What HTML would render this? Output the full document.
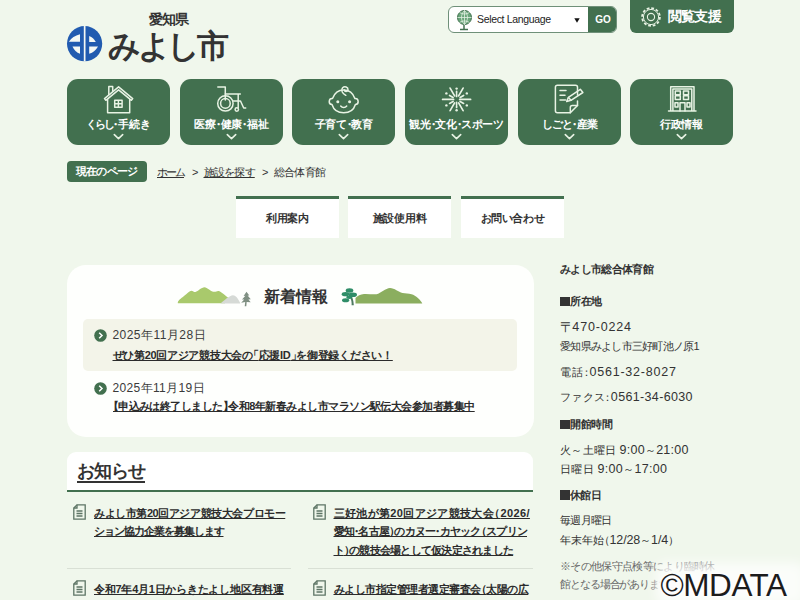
<!DOCTYPE html>
<html lang="ja">
<head>
<meta charset="utf-8">
<title>総合体育館 - みよし市</title>
<style>
*{box-sizing:border-box;margin:0;padding:0}
html,body{width:800px;height:600px;overflow:hidden}
body{font-family:"Liberation Sans",sans-serif;color:#333;background:#f0f7ec;position:relative;font-size:11px}
.abs{position:absolute}
.t{position:absolute;white-space:nowrap}
a{color:inherit}
i{font-style:normal}
i.o{margin-left:-.45em}
i.c{margin-right:-.45em}
i.m{margin:0 -.27em}
/* header */
#logo-mark{left:66px;top:25px;width:37px;height:37px}
#pref{left:149px;top:11px;font-size:13.5px;font-weight:bold;color:#333;line-height:18px}
#city{left:108px;top:26px;font-size:32px;font-weight:bold;color:#333;line-height:40px}
#lang{left:448px;top:6px;width:169px;height:27px;border:1px solid #6f9079;border-radius:6px;background:#fff;overflow:hidden}
#lang .txt{left:28px;top:0;line-height:25px;font-size:10.5px;color:#222}
#lang .arr{left:124px;top:0;line-height:26px;font-size:8px;color:#111}
#lang .go{left:139px;top:-1px;width:30px;height:27px;background:#42704f;color:#fff;font-size:10px;font-weight:bold;text-align:center;line-height:27px}
#assist{left:630px;top:0;width:104px;height:33px;background:#42704f;border-radius:0 0 6px 6px;color:#fff}
#assist .t{left:38px;top:0;font-size:13.5px;font-weight:bold;line-height:34px}
/* nav */
.nav{top:78.500px;width:103px;height:66px;background:#42704f;border-radius:11px;color:#fff;overflow:hidden}
.nav .lbl{position:absolute;left:-20px;right:-20px;top:37.500px;text-align:center;font-size:11px;font-weight:bold;line-height:17px;white-space:nowrap}
.nav svg{position:absolute;left:0;top:-.5px;width:103px;height:67px;fill:none;stroke:#e8f3e4;stroke-width:1.500;stroke-linecap:round;stroke-linejoin:round}
/* breadcrumb */
#here{left:67px;top:161px;width:80px;height:21px;background:#42704f;border-radius:4px;color:#fff}
#here .t{left:9px;top:0;font-size:11px;font-weight:bold;line-height:21px}
.cr{font-size:11px;line-height:20px;top:162px;color:#333}
.cr.u{text-decoration:underline}
/* tabs */
.tab{top:196px;width:103px;height:42px;background:#fff;border-top:3px solid #42704f;font-size:11px;font-weight:bold;text-align:center;line-height:39px;color:#333}
/* news */
#news{left:66.500px;top:264.500px;width:467px;height:172px;background:#fefffd;border-radius:19px}
#news h2{position:absolute;left:197px;top:20px;font-size:16px;line-height:24px;font-weight:bold;color:#333;white-space:nowrap}
.item1{left:16.500px;top:54.500px;width:434px;height:52px;background:#f3f4e9;border-radius:5px}
.date{font-size:12px;color:#3a3a3a;line-height:18px}
.date b{font-weight:normal}
.n b{font-weight:normal;font-size:12.500px}
.lnk{font-size:11px;font-weight:bold;text-decoration:underline;color:#2b2b2b;line-height:18px}
.bul{width:13px;height:13px}
/* oshirase */
#info{left:67px;top:452px;width:466px;height:40px;background:#fff;border-radius:9px 9px 0 0;border-bottom:2px solid #42704f}
#info h2{position:absolute;left:10px;top:6px;font-size:17.5px;font-weight:bold;text-decoration:underline;text-underline-offset:3.500px;text-decoration-thickness:1.500px;line-height:26px;color:#333;white-space:nowrap}
.li{font-size:11px;font-weight:bold;text-decoration:underline;line-height:18px;color:#2b2b2b}
.sepline{height:1px;background:#d9e0d5;top:568px}
.doc{width:13px;height:16px;fill:none;stroke:#5d7565;stroke-width:1.300}
/* side */
.s{left:560px;font-size:11px;color:#333;line-height:18px}
.s.b{font-weight:bold}
.s.g{color:#666}
.sq{display:inline-block;width:9.500px;height:9.500px;background:#333;color:transparent;overflow:hidden;vertical-align:-1px;font-size:8px;line-height:10px;margin-right:.5px}
.yu{font-size:14px;line-height:10px;vertical-align:-.5px;margin-right:-2.500px}
#wm{left:660.500px;top:564.500px;font-size:31.500px;line-height:40px;color:#1c1c1c;text-shadow:0 0 3px #fff,0 0 3px #fff,0 0 5px #fff,0 0 5px #fff,0 0 8px #fff,0 0 8px #fff,0 0 12px #fff,0 0 16px rgba(255,255,255,.9),0 0 20px rgba(255,255,255,.7)}
</style>
</head>
<body>
<!-- HEADER -->
<svg id="logo-mark" class="abs" viewBox="66 25 37 37"><circle cx="84.6" cy="43.7" r="17.6" fill="#215bb0"/>
<g fill="#f4f8f4"><rect x="83.8" y="26" width="1.7" height="35.5"/>
<path d="M68.8 41.7Q72.5 36 80 34.2V41.7Z"/><path d="M89.2 41.9V36Q93.5 37.5 95.8 41.900Z"/>
<path d="M89.200 46.500H98Q95 52 89.200 53.800Z"/><path d="M80 46.400V53.800Q75 52 72.500 46.400Z"/></g></svg>
<div id="pref" class="t" style="letter-spacing:-1.00px;">愛知県</div>
<div id="city" class="t" style="letter-spacing:-3.33px;">みよし市</div>
<div id="lang" class="abs">
  <svg class="abs" style="left:5.500px;top:.5px;width:18px;height:24px" viewBox="0 0 18 24"><circle cx="9.500" cy="9.500" r="7" fill="#6aa57a" stroke="#42704f" stroke-width="1"/><path d="M2.500 9.500h14M9.500 2.500v14M4.500 4.500c3.500 2 6.500 2 10 0M4.500 14.500c3.500-2 6.500-2 10 0M9.500 2.500c-4 4-4 10 0 14M9.500 2.500c4 4 4 10 0 14" stroke="#e2f0e2" stroke-width=".8" fill="none"/><path d="M5 21.500h8M9 17v4.500" stroke="#42704f" stroke-width="1.500" fill="none"/></svg>
  <div class="t txt" style="letter-spacing:-0.34px;">Select Language</div>
  <svg class="abs" style="left:124.500px;top:10.500px;width:6px;height:5px" viewBox="0 0 7 6"><path d="M.3 .3H6.700L3.500 5.600Z" fill="#111"/></svg>
  <div class="abs go">GO</div>
</div>
<div id="assist" class="abs"><div class="t" style="letter-spacing:-0.83px;">閲覧支援</div>
  <svg class="abs" style="left:10px;top:6px;width:22px;height:22px" viewBox="-11 -11 22 22" fill="none" stroke="#e8f3e4" stroke-width="1.1"><circle r="3.600"/><circle r="8.600" stroke-width="2.400" stroke-dasharray="2.700 1.803"/><circle r="7.300" stroke="#42704f" stroke-width="1.6"/><circle r="7.600" stroke-width="1"/></svg>
</div>

<!-- NAV -->
<div class="abs nav" style="left:67px"><svg viewBox="0 0 103 67"><path d="M37.500 20.600L51.600 8.900L65.700 20.600L64.400 22.300L51.600 11.800L38.800 22.300Z"/><path d="M40.600 21.500V34.800H62.700V21.500"/><path d="M41.800 16.500V8.600H45.700V13.300"/><path d="M47.700 22.200h7.400v7h-7.400zM51.400 22.200v7M47.700 25.700h7.400"/><path d="M47.300 56.600L51.500 60.600L55.700 56.600" stroke-width="1.600"/></svg><div class="lbl" style="letter-spacing:-0.01px;"><span style="letter-spacing:-2px">くらし</span><i class="m">・</i>手続き</div></div>
<div class="abs nav" style="left:180px"><svg viewBox="0 0 103 67"><path d="M37.800 9H45.300V22"/><path d="M45.300 16h15M58.200 16v13.500"/><circle cx="45.400" cy="25.400" r="7.700"/><circle cx="45.400" cy="25.400" r="4.800"/><path d="M53.200 23h7.300l3.200 7h2"/><circle cx="56.800" cy="31.500" r="1.700"/><path d="M47.300 56.600L51.500 60.600L55.700 56.600" stroke-width="1.600"/></svg><div class="lbl" style="letter-spacing:-0.16px;">医療<i class="m">・</i>健康<i class="m">・</i>福祉</div></div>
<div class="abs nav" style="left:292px"><svg viewBox="0 0 103 67"><path d="M40.500 20.500a3 3 0 0 0-.5 6c1.500 5 6 8.300 11.700 8.300s10.200-3.300 11.700-8.300a3 3 0 0 0-.5-6C61 15 57 12 51.700 12S42.500 15 40.500 20.500z"/><path d="M53.800 17.300C50.200 15.500 48.600 12 50.600 9.800C52.600 7.700 56.200 9 56 11.800C55.800 14 52.600 14.300 52.400 12"/><circle cx="45.800" cy="23.800" r="1.500" fill="#e8f3e4" stroke="none"/><circle cx="57.600" cy="23.800" r="1.500" fill="#e8f3e4" stroke="none"/><path d="M48.700 28c1.500 2 4.500 2 6 0"/><path d="M47.300 56.600L51.500 60.600L55.700 56.600" stroke-width="1.600"/></svg><div class="lbl" style="letter-spacing:-0.51px;">子育て<i class="m">・</i>教育</div></div>
<div class="abs nav" style="left:405px"><svg viewBox="0 0 103 67"><g transform="translate(51.600 21.400)" stroke-width="1.700"><path d="M3 0H14M-3 0H-14"/><path d="M2 -3.500L6.500 -11.300M-2 -3.500L-6.500 -11.300M2 3.500L6.500 11.300M-2 3.500L-6.500 11.300"/><path d="M3.500 -2L7 -4M-3.500 -2L-7 -4M3.500 2L7 4M-3.500 2L-7 4"/><path d="M0 -3V-8M0 3V8" stroke-dasharray="2 1.500"/><g fill="#e8f3e4" stroke="none"><circle cx="10.200" cy="-6" r="1.200"/><circle cx="-10.200" cy="-6" r="1.200"/><circle cx="10.200" cy="6" r="1.200"/><circle cx="-10.200" cy="6" r="1.200"/><circle cx="0" cy="-10.800" r="1.200"/><circle cx="0" cy="10.800" r="1.200"/></g></g><path d="M47.300 56.600L51.500 60.600L55.700 56.600" stroke-width="1.600"/></svg><div class="lbl" style="letter-spacing:-0.40px;">観光<i class="m">・</i>文化<i class="m">・</i>スポーツ</div></div>
<div class="abs nav" style="left:518px"><svg viewBox="0 0 103 67"><path d="M59.500 17V9.200a2 2 0 0 0-2-2H39.400a2 2 0 0 0-2 2V32.800a2 2 0 0 0 2 2H52.300L59.500 27.500V23"/><path d="M52.300 34.800V29.500a2 2 0 0 1 2-2H59.500"/><path d="M42 12.600h6M42 17.300h5M42 22h5.500"/><path d="M62.300 11.300l2.600 3.200L53 22.300l-4.300 1.200 1.700-4.100z"/><path d="M50.500 19.500l2.500 2.800"/><path d="M47.300 56.600L51.500 60.600L55.700 56.600" stroke-width="1.600"/></svg><div class="lbl" style="letter-spacing:-0.81px;">しごと<i class="m">・</i>産業</div></div>
<div class="abs nav" style="left:630px"><svg viewBox="0 0 103 67"><path d="M38.500 32.900H66M40.700 32.900V8.800H64V32.900M42.900 32.900V11H61.800V32.900"/><path d="M45.300 13h5v3.800h-5zM53.500 13h5v3.800h-5zM45.300 17.800h5v3.800h-5zM53.500 17.800h5v3.800h-5z"/><path d="M45 24.800h3v4.200h-3zM57 24.800h3v4.200h-3zM50 32.900V24.800h5V32.900"/><path d="M47.300 56.600L51.500 60.600L55.700 56.600" stroke-width="1.600"/></svg><div class="lbl" style="letter-spacing:-0.17px;">行政情報</div></div>

<!-- BREADCRUMB -->
<div id="here" class="abs"><div class="t" style="letter-spacing:-0.80px;">現在のページ</div></div>
<div class="t cr u" style="letter-spacing:-2.00px;left:157px">ホーム</div>
<div class="t cr" style="left:192px">&gt;</div>
<div class="t cr u" style="letter-spacing:-0.75px;left:203.500px">施設を探す</div>
<div class="t cr" style="left:262px">&gt;</div>
<div class="t cr" style="letter-spacing:-0.62px;left:273.500px">総合体育館</div>

<!-- TABS -->
<div class="abs tab" style="letter-spacing:-0.43px;left:236px">利用案内</div>
<div class="abs tab" style="letter-spacing:-0.25px;left:348px">施設使用料</div>
<div class="abs tab" style="letter-spacing:-0.40px;left:461px">お問い合わせ</div>

<!-- NEWS -->
<div id="news" class="abs">
  <svg class="abs" style="left:105px;top:18px;width:82px;height:24px" viewBox="172 283 82 24"><path d="M177.800 303.200C177.500 300.500 181 298.500 184 296C187 293.500 189.500 290.800 191.500 290.700C193 290.700 194 292.300 195.500 292C198 291 201.500 287.400 204.500 287.200C207 287.200 211 291.800 214.500 291.800C216 291.800 217 290.800 218.500 291C221 291.500 226 296 229.300 298.600L225 303.200Z" fill="#a9c96c"/><path d="M220.500 303.500C224 300.500 229.500 295.300 233 295.200C235.500 295.200 238 298 240.400 303.500Z" fill="#d6dad6"/><path d="M246.500 291.800l2.800 3.600l-1.700 .2l3.200 3.600l-2.400 .3l2.300 2.800l-4 -.2l-.4 4.200h-1.600l.5-4.200l-4 .6l3-3.300l-2.200 .1l3.400-3.700l-1.800 .2z" fill="#7f8f82"/></svg>
  <svg class="abs" style="left:273px;top:18px;width:86px;height:24px" viewBox="340 283 86 24"><path d="M355.500 303.600V298C357.500 296 360.500 294.200 364 294C368 293.800 373 294.500 376.500 294.200C381 293.200 385.500 288.200 390 288C394.500 288 398.500 292 402.500 293C405.500 293.600 408.500 293.400 411.500 294.200C416 295.500 420.500 299.500 422.300 303.600Z" fill="#8bae5f"/><path d="M352.300 297.500C353.300 300 353.600 302.500 353.800 305.300H351.600C351.800 303 351.500 300.500 350.500 298.500Z" fill="#4d7a60"/><g fill="#2f8d68"><ellipse cx="349.500" cy="290.500" rx="3.800" ry="2.200"/><ellipse cx="345.500" cy="294.200" rx="3.800" ry="2.100"/><ellipse cx="352.800" cy="294.800" rx="4.200" ry="2.300"/><ellipse cx="349.300" cy="297.200" rx="3" ry="1.700"/><ellipse cx="345.600" cy="300.300" rx="3.600" ry="2"/></g></svg>
  <h2 style="letter-spacing:0.00px;">新着情報</h2>
  <div class="abs item1"></div>
  <svg class="abs bul" style="left:27px;top:64px" viewBox="0 0 13 13"><circle cx="6.500" cy="6.500" r="6.300" fill="#42704f"/><path d="M5.200 3.800L8 6.500L5.200 9.200" fill="none" stroke="#fff" stroke-width="1.500"/></svg>
  <div class="t date" style="letter-spacing:0.45px;left:46px;top:61.500px"><b>2025</b>年<b>11</b>月<b>28</b>日</div>
  <div class="t lnk" style="letter-spacing:-0.28px;left:46px;top:81.500px">ぜひ第20回アジア競技大会の<i class="o">「</i>応援ID<i class="c">」</i>を御登録ください！</div>
  <svg class="abs bul" style="left:27px;top:117px" viewBox="0 0 13 13"><circle cx="6.500" cy="6.500" r="6.300" fill="#42704f"/><path d="M5.200 3.800L8 6.500L5.200 9.200" fill="none" stroke="#fff" stroke-width="1.500"/></svg>
  <div class="t date" style="letter-spacing:0.35px;left:46px;top:114px"><b>2025</b>年<b>11</b>月<b>19</b>日</div>
  <div class="t lnk" style="letter-spacing:-0.53px;left:46px;top:132px;overflow:hidden"><i class="o">【</i>申込みは終了しました<i class="c">】</i>令和8年新春みよし市マラソン駅伝大会参加者募集中</div>
</div>

<!-- INFO -->
<div id="info" class="abs"><h2 style="letter-spacing:-1.00px;">お知らせ</h2></div>
<svg class="abs doc" style="left:73px;top:504px" viewBox="0 0 13 16"><path d="M4 .8H12.200V15.200H.8V4Z"/><path d="M4 .8V4H.8M3.500 7h6M3.500 9.500h6M3.500 12h6"/></svg>
<div class="t li" style="letter-spacing:-0.42px;left:94px;top:503.500px">みよし市第20回アジア競技大会プロモー</div>
<div class="t li" style="letter-spacing:-1.04px;left:94px;top:522px">ション協力企業を募集します</div>
<svg class="abs doc" style="left:312.500px;top:504px" viewBox="0 0 13 16"><path d="M4 .8H12.200V15.200H.8V4Z"/><path d="M4 .8V4H.8M3.500 7h6M3.500 9.500h6M3.500 12h6"/></svg>
<div class="t li" style="letter-spacing:0.36px;left:333.500px;top:503.500px">三好池が第20回アジア競技大会<i class="o">（</i>2026/</div>
<div class="t li" style="letter-spacing:-0.75px;left:333.500px;top:522px">愛知<i class="m">・</i>名古屋<i class="c">）</i>のカヌー<i class="m">・</i>カヤック<i class="o">（</i>スプリン</div>
<div class="t li" style="letter-spacing:-0.75px;left:333.500px;top:541px">ト<i class="c">）</i>の競技会場として仮決定されました</div>
<div class="abs sepline" style="left:67px;width:224px"></div>
<div class="abs sepline" style="left:308px;width:225px"></div>
<svg class="abs doc" style="left:73px;top:580px" viewBox="0 0 13 16"><path d="M4 .8H12.200V15.200H.8V4Z"/><path d="M4 .8V4H.8M3.500 7h6M3.500 9.500h6M3.500 12h6"/></svg>
<div class="t li" style="letter-spacing:-0.24px;left:94px;top:579.500px">令和7年4月1日からきたよし地区有料運</div>
<svg class="abs doc" style="left:312.500px;top:580px" viewBox="0 0 13 16"><path d="M4 .8H12.200V15.200H.8V4Z"/><path d="M4 .8V4H.8M3.500 7h6M3.500 9.500h6M3.500 12h6"/></svg>
<div class="t li" style="letter-spacing:-0.49px;left:333.500px;top:579.500px">みよし市指定管理者選定審査会<i class="o">（</i>太陽の広</div>

<!-- SIDE -->
<div class="t s b" style="letter-spacing:-0.68px;top:259.500px">みよし市総合体育館</div>
<div class="t s b" style="letter-spacing:-0.33px;top:292px"><span class="sq">■</span>所在地</div>
<div class="t s n" style="letter-spacing:0.83px;top:318px"><span class="yu">〒</span><b>470-0224</b></div>
<div class="t s" style="letter-spacing:-0.73px;top:337px">愛知県みよし市三好町池ノ原1</div>
<div class="t s n" style="letter-spacing:0.79px;top:362.500px">電話<i class="m">：</i><b>0561-32-8027</b></div>
<div class="t s n" style="letter-spacing:0.35px;top:388px">ファクス<i class="m">：</i><b>0561-34-6030</b></div>
<div class="t s b" style="letter-spacing:-0.35px;top:415px"><span class="sq">■</span>開館時間</div>
<div class="t s n" style="letter-spacing:0.25px;top:441px">火～土曜日 <b>9:00</b>～<b>21:00</b></div>
<div class="t s n" style="letter-spacing:0.33px;top:459.500px">日曜日 <b>9:00</b>～<b>17:00</b></div>
<div class="t s b" style="letter-spacing:-0.57px;top:485.500px"><span class="sq">■</span>休館日</div>
<div class="t s" style="letter-spacing:-0.68px;top:510.500px">毎週月曜日</div>
<div class="t s n" style="letter-spacing:-0.12px;top:530.500px">年末年始<i class="o">（</i><b>12/28</b>～<b>1/4</b><i class="c">）</i></div>
<div class="t s g" style="letter-spacing:-0.68px;top:556.500px">※その他保守点検等により臨時休</div>
<div class="t s g" style="letter-spacing:-1.09px;top:574.500px">館となる場合があります<i class="c">。</i></div>
<div class="abs" style="left:656px;top:562px;width:150px;height:44px;background:rgba(255,255,255,.72);filter:blur(6px);border-radius:10px"></div>
<div id="wm" class="t" style="letter-spacing:-0.44px;">©MDATA</div>
</body>
</html>
